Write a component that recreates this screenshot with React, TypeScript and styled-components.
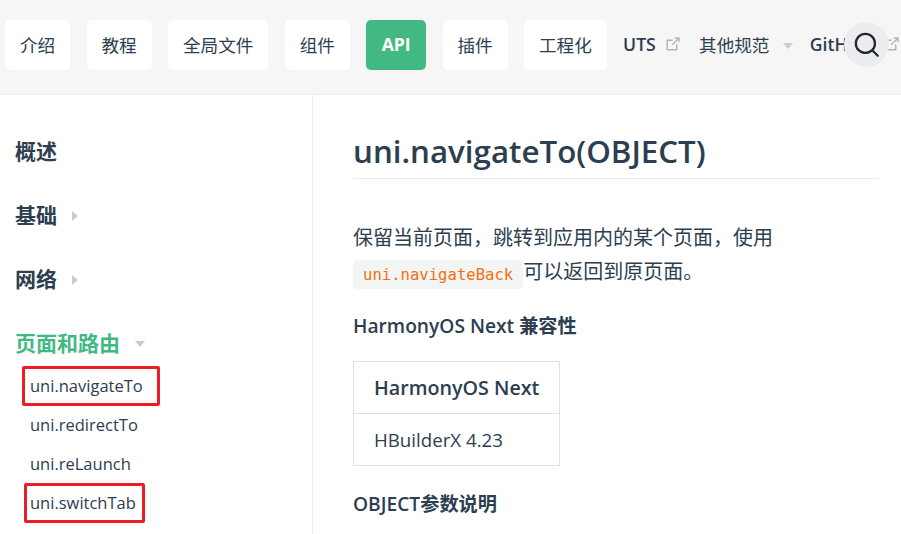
import React from "react";
import styled, { createGlobalStyle } from "styled-components";

const FONT = `"Open Sans", "Noto Sans CJK SC", sans-serif`;
const TEXT = "#2c3e50";
const GREEN = "#42b983";

const Global = createGlobalStyle`
  *, *::before, *::after { box-sizing: border-box; }
  html, body { margin: 0; padding: 0; background: #fff; overflow: hidden; }
  body { font-family: ${FONT}; color: ${TEXT}; }
`;

const Page = styled.div`
  width: 901px;
  height: 534px;
  overflow: hidden;
  position: relative;
`;

const Header = styled.header`
  height: 95px;
  background: #f6f6f6;
  border-bottom: 1px solid #eaecef;
  display: flex;
  align-items: flex-start;
  gap: 16.3px;
  padding: 20px 0 0 5px;
  white-space: nowrap;
  overflow: hidden;
`;

const NavButton = styled.div<{ $active?: boolean }>`
  height: 50px;
  padding: 0 ${(p) => (p.$active ? 15.5 : 15)}px 2px;
  border-radius: 5px;
  background: ${(p) => (p.$active ? GREEN : "#fff")};
  color: ${(p) => (p.$active ? "#fff" : TEXT)};
  font-size: 17.6px;
  font-weight: ${(p) => (p.$active ? 700 : 400)};
  display: flex;
  align-items: center;
  flex: none;
`;

const NavLink = styled.div<{ $bold?: boolean; $iconGap?: number }>`
  height: 50px;
  padding-bottom: 2px;
  font-size: 17.6px;
  font-weight: ${(p) => (p.$bold ? 600 : 400)};
  display: flex;
  align-items: center;
  flex: none;
  gap: ${(p) => p.$iconGap ?? 7}px;
  svg { margin: 0 2px 0 1px; }
`;

const Caret = styled.span<{ $gap: number }>`
  display: inline-block;
  width: 0;
  height: 0;
  border-left: 5.5px solid transparent;
  border-right: 5.5px solid transparent;
  border-top: 6px solid #ccc;
  margin: 4px 0 0 ${(p) => p.$gap}px;
`;

const SideCaretRight = styled.span`
  display: inline-block;
  width: 0;
  height: 0;
  border-top: 5.5px solid transparent;
  border-bottom: 5.5px solid transparent;
  border-left: 6px solid #ccc;
  margin: 4px 0 0 15px;
`;

const SearchButton = styled.div`
  position: absolute;
  left: 844px;
  top: 22px;
  width: 45px;
  height: 45px;
  border-radius: 50%;
  background: #ebedf1;
  color: #24292e;
  display: flex;
  align-items: center;
  justify-content: center;
`;

const Body = styled.div`
  display: flex;
  height: 439px;
`;

const Sidebar = styled.aside`
  width: 313px;
  flex: none;
  border-right: 1px solid #eaecef;
  padding: 22.5px 0 0 15px;
`;

const Group = styled.div<{ $active?: boolean }>`
  height: 64px;
  display: flex;
  align-items: center;
  font-size: 21px;
  font-weight: 700;
  color: ${(p) => (p.$active ? GREEN : TEXT)};
  margin-bottom: ${(p) => (p.$active ? "-7.5px" : "0")};
`;

const SubList = styled.div`
  padding-left: 15px;
  display: flex;
  flex-direction: column;
`;

const SubItem = styled.div<{ $marked?: "wide" | "narrow" }>`
  position: relative;
  height: 39px;
  line-height: 39px;
  font-size: 16.5px;
  width: fit-content;
  &::after {
    content: ${(p) => (p.$marked ? '""' : "none")};
    position: absolute;
    left: ${(p) => (p.$marked === "wide" ? -8 : -6)}px;
    right: ${(p) => (p.$marked === "wide" ? -17 : -9)}px;
    top: 0;
    bottom: -1px;
    border: 3.5px solid #ee1c25;
    border-radius: 2px;
  }
`;

const Content = styled.main`
  flex: 1;
  padding: 32px 22px 0 40px;
  min-width: 0;
`;

const Title = styled.h1`
  margin: 0;
  font-size: 31.3px;
  font-weight: 600;
  line-height: 49px;
  height: 52px;
  border-bottom: 1px solid #eaecef;
`;

const Para = styled.p`
  margin: 42px 0 0;
  font-size: 20px;
  line-height: 34px;
  white-space: nowrap;
`;

const Code = styled.code`
  font-family: "DejaVu Sans Mono", "Liberation Mono", monospace;
  font-size: 15.6px;
  color: #f66f0f;
  background: #f3f4f4;
  border-radius: 4px;
  padding: 5.5px 10px;
`;

const SubHeading = styled.h3<{ $top: number }>`
  margin: ${(p) => p.$top}px 0 0;
  font-size: 19.2px;
  font-weight: 600;
  line-height: 28px;
`;

const CompatTable = styled.table`
  border-collapse: collapse;
  margin-top: 21px;
  th, td {
    border: 1px solid #dfe2e5;
    padding: 0 20px;
    height: 52px;
    text-align: left;
  }
  th { font-weight: 600; font-size: 19.7px; }
  td { font-size: 18.7px; }
`;

function ExternalIcon() {
  return (
    <svg width="17" height="17" viewBox="0 0 100 100" fill="#b4b4b4">
      <path d="M18.8 85.1h56c2.2 0 4-1.8 4-4v-32h-8v28h-48v-48h28v-8h-32c-2.2 0-4 1.8-4 4v56c0 2.2 1.8 4 4 4z" />
      <path d="M45.7 48.7l5.6 5.6 32.7-32.7v14.4h8V7.9H63.9v8h14.4z" />
    </svg>
  );
}

function SearchIcon() {
  return (
    <svg width="27" height="27" viewBox="0 0 24 24" fill="none" stroke="currentColor" strokeWidth="2" strokeLinecap="round">
      <circle cx="11" cy="11" r="8.5" />
      <path d="M17.5 17.5l4.5 4.5" />
    </svg>
  );
}

const App = () => {
  return (
    <Page>
      <Global />
      <Header>
        <NavButton>介绍</NavButton>
        <NavButton>教程</NavButton>
        <NavButton>全局文件</NavButton>
        <NavButton>组件</NavButton>
        <NavButton $active>API</NavButton>
        <NavButton>插件</NavButton>
        <NavButton>工程化</NavButton>
        <NavLink $bold>UTS <ExternalIcon /></NavLink>
        <NavLink>其他规范<Caret $gap={7} /></NavLink>
        <NavLink $bold $iconGap={12}>GitHub <ExternalIcon /></NavLink>
      </Header>
      <SearchButton><SearchIcon /></SearchButton>
      <Body>
        <Sidebar>
          <Group>概述</Group>
          <Group>基础<SideCaretRight /></Group>
          <Group>网络<SideCaretRight /></Group>
          <Group $active>页面和路由<Caret $gap={15} /></Group>
          <SubList>
            <SubItem $marked="wide">uni.navigateTo</SubItem>
            <SubItem>uni.redirectTo</SubItem>
            <SubItem>uni.reLaunch</SubItem>
            <SubItem $marked="narrow">uni.switchTab</SubItem>
          </SubList>
        </Sidebar>
        <Content>
          <Title>uni.navigateTo(OBJECT)</Title>
          <Para>
            保留当前页面，跳转到应用内的某个页面，使用
            <br />
            <Code>uni.navigateBack</Code>可以返回到原页面。
          </Para>
          <SubHeading $top={21}>HarmonyOS Next 兼容性</SubHeading>
          <CompatTable>
            <thead><tr><th>HarmonyOS Next</th></tr></thead>
            <tbody><tr><td>HBuilderX 4.23</td></tr></tbody>
          </CompatTable>
          <SubHeading $top={24}>OBJECT参数说明</SubHeading>
        </Content>
      </Body>
    </Page>
  );
};

export default App;
